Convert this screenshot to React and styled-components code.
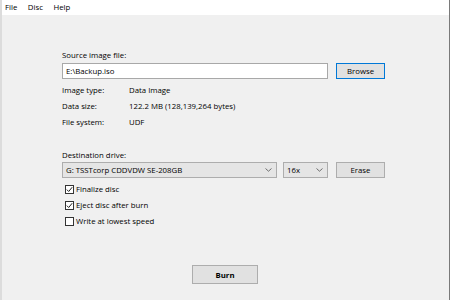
import * as React from 'react';
import styled, { createGlobalStyle } from 'styled-components';

const Global = createGlobalStyle`
  html, body {
    margin: 0;
    padding: 0;
    background: #f0f0f0;
  }
  body {
    font-family: "Open Sans", "Noto Sans", sans-serif;
    font-size: 7.8px;
    color: #000000;
  }
`;

const Window = styled.div`
  width: 450px;
  height: 300px;
  box-sizing: border-box;
  border-left: 2px solid #dcdcdc;
  border-right: 1px solid #7a7a7a;
  background: #f0f0f0;
  display: flex;
  flex-flow: column;
  overflow: hidden;
`;

const MenuBar = styled.div`
  height: 15px;
  background: #ffffff;
  display: flex;
  align-items: center;
  padding-left: 3px;
  gap: 10.5px;
  flex: 0 0 auto;
`;

const MenuItem = styled.span`
  line-height: 15px;
`;

const Content = styled.div`
  display: flex;
  flex-flow: column;
  padding: 34px 0 0 60px;
`;

const Label = styled.div`
  line-height: 12px;
  margin-top: ${p => p.$top || 0}px;
`;

const Row = styled.div`
  display: flex;
  align-items: center;
  gap: ${p => p.$gap || 8}px;
  margin-top: ${p => p.$top || 0}px;
`;

const TextBox = styled.div`
  width: 266px;
  height: 16px;
  box-sizing: border-box;
  background: #ffffff;
  border: 1px solid #a8a8a8;
  padding-left: 3px;
  line-height: 14px;
`;

const Button = styled.div`
  width: ${p => p.$w || 49}px;
  height: ${p => p.$h || 16}px;
  box-sizing: border-box;
  background: #e1e1e1;
  border: 1px solid ${p => p.$focus ? '#0078d7' : '#adadad'};
  display: flex;
  align-items: center;
  justify-content: center;
  font-weight: ${p => p.$bold ? 700 : 400};
`;

const InfoRows = styled.div`
  display: flex;
  flex-flow: column;
  margin-top: 3px;
`;

const InfoRow = styled.div`
  display: flex;
  line-height: 16px;
`;

const InfoKey = styled.span`
  width: 67px;
  flex: 0 0 auto;
`;

const Combo = styled.div`
  width: ${p => p.$w}px;
  height: 16px;
  box-sizing: border-box;
  background: #e5e5e5;
  border: 1px solid #adadad;
  display: flex;
  align-items: center;
  justify-content: space-between;
  padding: 0 4px 0 3px;
`;

const Checks = styled.div`
  display: flex;
  flex-flow: column;
  margin-top: 3px;
`;

const CheckRow = styled.div`
  display: flex;
  align-items: center;
  height: 16px;
  gap: 2px;
  padding-left: 3px;
`;

const Box = styled.div`
  width: 9px;
  height: 9px;
  box-sizing: border-box;
  border: 1px solid #333333;
  background: #ffffff;
  display: flex;
  align-items: center;
  justify-content: center;
`;

const Footer = styled.div`
  display: flex;
  justify-content: center;
  margin-top: 36px;
  padding-right: 1px;
`;

const Chevron = () => (
  <svg width="7" height="4" viewBox="0 0 7 4">
    <path d="M0.5 0.5 L3.5 3.2 L6.5 0.5" fill="none" stroke="#606060" strokeWidth="0.9" />
  </svg>
);

const Tick = () => (
  <svg width="7" height="7" viewBox="0 0 7 7">
    <path d="M0.8 3.6 L2.7 5.5 L6.2 1.2" fill="none" stroke="#222" strokeWidth="1" />
  </svg>
);

const Check = ({ checked, children }) => (
  <CheckRow>
    <Box>{checked && <Tick />}</Box>
    <span>{children}</span>
  </CheckRow>
);

export default function App() {
  return <Window>
    <Global />
    <MenuBar>
      <MenuItem>File</MenuItem>
      <MenuItem>Disc</MenuItem>
      <MenuItem>Help</MenuItem>
    </MenuBar>
    <Content>
      <Label>Source image file:</Label>
      <Row $top={2}>
        <TextBox>E:\Backup.iso</TextBox>
        <Button $focus>Browse</Button>
      </Row>
      <InfoRows>
        <InfoRow><InfoKey>Image type:</InfoKey><span>Data Image</span></InfoRow>
        <InfoRow><InfoKey>Data size:</InfoKey><span>122.2 MB (128,139,264 bytes)</span></InfoRow>
        <InfoRow><InfoKey>File system:</InfoKey><span>UDF</span></InfoRow>
      </InfoRows>
      <Label $top={19}>Destination drive:</Label>
      <Row $top={1}>
        <Combo $w={215}><span>G: TSSTcorp CDDVDW SE-208GB</span><Chevron /></Combo>
        <Combo $w={45} style={{ marginLeft: -2 }}><span>16x</span><Chevron /></Combo>
        <Button>Erase</Button>
      </Row>
      <Checks>
        <Check checked>Finalize disc</Check>
        <Check checked>Eject disc after burn</Check>
        <Check>Write at lowest speed</Check>
      </Checks>
    </Content>
    <Footer>
      <Button $w={66} $h={19} $bold>Burn</Button>
    </Footer>
  </Window>;
}
